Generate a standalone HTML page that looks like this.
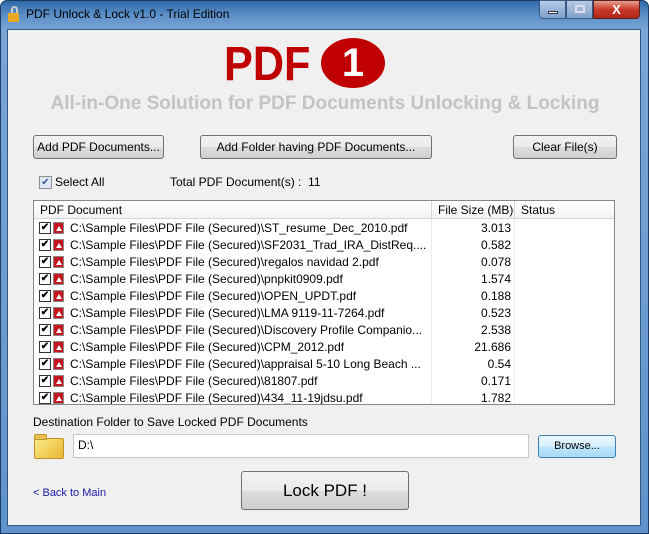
<!DOCTYPE html>
<html><head><meta charset="utf-8"><style>
*{margin:0;padding:0;box-sizing:border-box}
body{width:649px;height:534px;overflow:hidden;background:#fff;font-family:"Liberation Sans",sans-serif;font-size:12px;color:#000;position:relative}
.frame{position:absolute;left:0;top:0;width:649px;height:534px;background:linear-gradient(180deg,#2f6aa8 0,#5b8fc8 14px,#7aa6d6 30px,#5f93cb 100%);border:1px solid #1d3c66;border-radius:7px 7px 0 0}
.client{position:absolute;left:7px;top:29px;width:634px;height:497px;background:#f0f0f0;border:1px solid #33577f}
.a{position:absolute;white-space:nowrap}
.btn{position:absolute;border:1px solid #707070;border-radius:3px;background:linear-gradient(#f2f2f2 0,#ebebeb 50%,#dddddd 51%,#cfcfcf 100%);text-align:center;font-size:12px;white-space:nowrap}
.row{position:absolute;left:0;height:17px;width:578px;font-size:12px;white-space:nowrap}
.cb{position:absolute;left:5px;top:2px;width:12px;height:12px;border:1px solid #333;background:#fff;font-size:10px;line-height:10px;text-align:center;font-weight:bold}
.pi{position:absolute;left:19px;top:2px;width:11px;height:12px;background:#c4161c;border:1px solid #888}
.pi:after{content:"";position:absolute;left:2px;top:3px;border-left:3px solid transparent;border-right:3px solid transparent;border-bottom:5px solid #fff}
.nm{position:absolute;left:36px;top:1px;width:360px;overflow:hidden}
.sz{position:absolute;left:397px;width:80px;top:1px;text-align:right}
</style></head><body>
<div class="frame"></div>
<div class="a" style="left:8px;top:6px;width:12px;height:16px">
<div style="position:absolute;left:3px;top:0;width:7px;height:8px;border:2px solid #ccc;border-bottom:none;border-radius:4px 4px 0 0"></div>
<div style="position:absolute;left:0;top:7px;width:11px;height:9px;background:#e8a820;border-radius:1px"></div></div>
<div class="a" style="left:26px;top:7px;font-size:12px;color:#000">PDF Unlock &amp; Lock v1.0 - Trial Edition</div>
<div class="a" style="left:539px;top:0;width:27px;height:19px;border:1px solid #3a5a86;border-radius:0 0 0 4px;background:linear-gradient(#b6cbe6,#7e9fca)"><div style="position:absolute;left:8px;top:10px;width:10px;height:3px;background:#fff;border:1px solid #334"></div></div>
<div class="a" style="left:566px;top:0;width:27px;height:19px;border:1px solid #3a5a86;background:linear-gradient(#b6cbe6,#7e9fca)"><div style="position:absolute;left:8px;top:4px;width:10px;height:8px;border:2px solid #dde"></div></div>
<div class="a" style="left:593px;top:0;width:47px;height:19px;border:1px solid #5a2020;border-radius:0 0 4px 0;background:linear-gradient(#e8a090,#c8382a 50%,#b02818);color:#fff;font-weight:bold;text-align:center;font-size:13px;line-height:17px">X</div>
<div class="client">
<div class="a" style="left:216px;top:10px;font-family:'Liberation Sans',sans-serif;font-weight:bold;font-size:48px;color:#c00000;line-height:50px;transform:scaleX(.9);transform-origin:left">PDF</div>
<div class="a" style="left:313px;top:8px;width:64px;height:50px;border-radius:50%;background:#c00000;color:#fff;font-family:'Liberation Sans',sans-serif;font-weight:bold;font-size:40px;line-height:50px;text-align:center">1</div>
<div class="a" style="left:0;width:634px;top:63px;text-align:center;font-family:'Liberation Sans',sans-serif;font-weight:bold;font-size:19px;color:#c3c3c3">All-in-One Solution for PDF Documents Unlocking &amp; Locking</div>
<div class="btn" style="left:25px;top:105px;width:131px;height:24px;line-height:22px">Add PDF Documents...</div>
<div class="btn" style="left:192px;top:105px;width:232px;height:24px;line-height:22px">Add Folder having PDF Documents...</div>
<div class="btn" style="left:505px;top:105px;width:104px;height:24px;line-height:22px">Clear File(s)</div>
<div class="a" style="left:31px;top:146px;width:13px;height:13px;border:1px solid #8f8f8f;background:#dfe8f6;color:#3d5c94;font-size:10px;line-height:11px;text-align:center">✔</div>
<div class="a" style="left:47px;top:145px">Select All</div>
<div class="a" style="left:162px;top:145px">Total PDF Document(s) :&nbsp; 11</div>
<div class="a" style="left:25px;top:170px;width:582px;height:205px;background:#fff;border:1px solid #828790;overflow:hidden">
<div class="a" style="left:0;top:0;width:580px;height:18px;background:linear-gradient(#fff,#f3f3f3);border-bottom:1px solid #d5d5d5">
<div class="a" style="left:6px;top:2px">PDF Document</div>
<div class="a" style="left:397px;top:0;height:18px;border-left:1px solid #d5d5d5;padding:2px 6px">File Size (MB)</div>
<div class="a" style="left:480px;top:0;height:18px;border-left:1px solid #d5d5d5;padding:2px 6px">Status</div></div>
<div class="a" style="left:397px;top:18px;width:1px;height:190px;background:#eee"></div>
<div class="a" style="left:480px;top:18px;width:1px;height:190px;background:#eee"></div>
<div class="row" style="top:19px"><div class="cb">✔</div><div class="pi"></div><div class="nm">C:\Sample Files\PDF File (Secured)\ST_resume_Dec_2010.pdf</div><div class="sz">3.013</div></div>
<div class="row" style="top:36px"><div class="cb">✔</div><div class="pi"></div><div class="nm">C:\Sample Files\PDF File (Secured)\SF2031_Trad_IRA_DistReq....</div><div class="sz">0.582</div></div>
<div class="row" style="top:53px"><div class="cb">✔</div><div class="pi"></div><div class="nm">C:\Sample Files\PDF File (Secured)\regalos navidad 2.pdf</div><div class="sz">0.078</div></div>
<div class="row" style="top:70px"><div class="cb">✔</div><div class="pi"></div><div class="nm">C:\Sample Files\PDF File (Secured)\pnpkit0909.pdf</div><div class="sz">1.574</div></div>
<div class="row" style="top:87px"><div class="cb">✔</div><div class="pi"></div><div class="nm">C:\Sample Files\PDF File (Secured)\OPEN_UPDT.pdf</div><div class="sz">0.188</div></div>
<div class="row" style="top:104px"><div class="cb">✔</div><div class="pi"></div><div class="nm">C:\Sample Files\PDF File (Secured)\LMA 9119-11-7264.pdf</div><div class="sz">0.523</div></div>
<div class="row" style="top:121px"><div class="cb">✔</div><div class="pi"></div><div class="nm">C:\Sample Files\PDF File (Secured)\Discovery Profile Companio...</div><div class="sz">2.538</div></div>
<div class="row" style="top:138px"><div class="cb">✔</div><div class="pi"></div><div class="nm">C:\Sample Files\PDF File (Secured)\CPM_2012.pdf</div><div class="sz">21.686</div></div>
<div class="row" style="top:155px"><div class="cb">✔</div><div class="pi"></div><div class="nm">C:\Sample Files\PDF File (Secured)\appraisal 5-10 Long Beach ...</div><div class="sz">0.54</div></div>
<div class="row" style="top:172px"><div class="cb">✔</div><div class="pi"></div><div class="nm">C:\Sample Files\PDF File (Secured)\81807.pdf</div><div class="sz">0.171</div></div>
<div class="row" style="top:189px"><div class="cb">✔</div><div class="pi"></div><div class="nm">C:\Sample Files\PDF File (Secured)\434_11-19jdsu.pdf</div><div class="sz">1.782</div></div>
</div>
<div class="a" style="left:25px;top:385px">Destination Folder to Save Locked PDF Documents</div>
<div class="a" style="left:26px;top:408px;width:30px;height:21px;background:linear-gradient(135deg,#fbe98a,#e8b830);border:1px solid #c0902a;border-radius:2px"></div>
<div class="a" style="left:26px;top:404px;width:13px;height:6px;background:#e8c050;border:1px solid #c0902a;border-radius:2px 2px 0 0"></div>
<div class="a" style="left:65px;top:404px;width:456px;height:24px;background:#fff;border:1px solid #c8c8c8;padding:3px 4px">D:\</div>
<div class="btn" style="left:530px;top:405px;width:78px;height:23px;line-height:21px;border-color:#3c7fb1;background:linear-gradient(#eaf6fd,#d9f0fc 50%,#bee6fd 51%,#a7d9f5);font-size:11px">Browse...</div>
<div class="a" style="left:25px;top:457px;color:#1a1aa6;font-size:11px">&lt; Back to Main</div>
<div class="btn" style="left:233px;top:441px;width:168px;height:39px;line-height:37px;font-size:17px">Lock PDF !</div>
</div>
</body></html>
